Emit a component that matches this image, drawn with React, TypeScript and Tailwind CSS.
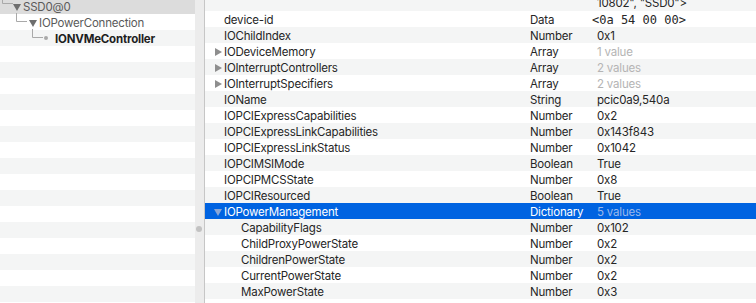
import type { ReactNode } from 'react';

/* IORegistryExplorer-style split view: device tree on the left,
   property table for the selected node on the right. */

type Prop = {
  key: string;
  type: string;
  value: string;
  level?: 0 | 1;
  expander?: 'closed' | 'open';
  dim?: boolean;
  mono?: boolean;
  selected?: boolean;
};

const props: Prop[] = [
  { key: 'device-id', type: 'Data', value: '<0a 54 00 00>', mono: true },
  { key: 'IOChildIndex', type: 'Number', value: '0x1' },
  { key: 'IODeviceMemory', type: 'Array', value: '1 value', expander: 'closed', dim: true },
  { key: 'IOInterruptControllers', type: 'Array', value: '2 values', expander: 'closed', dim: true },
  { key: 'IOInterruptSpecifiers', type: 'Array', value: '2 values', expander: 'closed', dim: true },
  { key: 'IOName', type: 'String', value: 'pcic0a9,540a' },
  { key: 'IOPCIExpressCapabilities', type: 'Number', value: '0x2' },
  { key: 'IOPCIExpressLinkCapabilities', type: 'Number', value: '0x143f843' },
  { key: 'IOPCIExpressLinkStatus', type: 'Number', value: '0x1042' },
  { key: 'IOPCIMSIMode', type: 'Boolean', value: 'True' },
  { key: 'IOPCIPMCSState', type: 'Number', value: '0x8' },
  { key: 'IOPCIResourced', type: 'Boolean', value: 'True' },
  { key: 'IOPowerManagement', type: 'Dictionary', value: '5 values', expander: 'open', dim: true, selected: true },
  { key: 'CapabilityFlags', type: 'Number', value: '0x102', level: 1 },
  { key: 'ChildProxyPowerState', type: 'Number', value: '0x2', level: 1 },
  { key: 'ChildrenPowerState', type: 'Number', value: '0x2', level: 1 },
  { key: 'CurrentPowerState', type: 'Number', value: '0x2', level: 1 },
  { key: 'MaxPowerState', type: 'Number', value: '0x3', level: 1 },
];

function Triangle({ open, className }: { open?: boolean; className?: string }) {
  return (
    <svg width="8" height="8" viewBox="0 0 8 8" className={className}>
      {open ? <path d="M0 1 H8 L4 8 Z" fill="currentColor" /> : <path d="M1 0 V8 L8 4 Z" fill="currentColor" />}
    </svg>
  );
}

/* ── Left: device tree ─────────────────────────────────────────────────────── */

function Elbow({ left, top }: { left: number; top: number }) {
  // "└" connector drawn in the tree gutter
  return (
    <svg width="12" height="12" viewBox="0 0 12 12" className="absolute" style={{ left, top }}>
      <path d="M1.5 0 V8.5 H12" stroke="#a9a9a9" strokeWidth="1" fill="none" />
    </svg>
  );
}

function TreeRow({ className, children }: { className?: string; children: ReactNode }) {
  return <div className={`relative h-4 shrink-0 ${className ?? ''}`}>{children}</div>;
}

function DeviceTree() {
  const stripes = Array.from({ length: 16 }, (_, i) => i);
  return (
    <div className="flex w-[195px] shrink-0 flex-col overflow-hidden">
      <div className="relative h-[14px] shrink-0 bg-[#dcdcdc]">
        <Elbow left={1} top={-5} />
        <Triangle open className="absolute left-[13px] top-[3px] text-[#6e6e6e]" />
        <span className="absolute left-[23px] top-[-2px] leading-[18px] text-[#5a5a5a]">SSD0@0</span>
      </div>
      <TreeRow>
        <Elbow left={15} top={-1} />
        <Triangle open className="absolute left-[29px] top-[5px] text-[#6e6e6e]" />
        <span className="absolute left-[39px] top-0 leading-[18px] text-[#5a5a5a]">IOPowerConnection</span>
      </TreeRow>
      <TreeRow className="bg-[#f4f5f5]">
        <Elbow left={31} top={-1} />
        <span className="absolute left-[44px] top-[6px] h-[4px] w-[4px] rounded-full bg-[#a9a9a9]" />
        <span className="absolute left-[55px] top-0 font-bold leading-[18px] text-[#1e1e1e]">IONVMeController</span>
      </TreeRow>
      {stripes.map((i) => (
        <TreeRow key={i} className={i % 2 === 1 ? 'bg-[#f4f5f5]' : 'bg-white'}>
          {null}
        </TreeRow>
      ))}
    </div>
  );
}

/* ── Right: property table ─────────────────────────────────────────────────── */

function PropRow({ p, striped }: { p: Prop; striped: boolean }) {
  const bg = p.selected ? 'bg-[#0063e1] text-white' : striped ? 'bg-[#f4f5f5]' : 'bg-white';
  const valueColor = p.dim ? (p.selected ? 'text-[#9ab8ea]' : 'text-[#b4b4b4]') : '';
  return (
    <div className={`flex h-4 shrink-0 items-start leading-[18px] ${bg}`}>
      <div className={`relative flex w-[325px] shrink-0 items-start ${p.level === 1 ? 'pl-[36px]' : 'pl-[19px]'}`}>
        {p.expander && (
          <Triangle
            open={p.expander === 'open'}
            className={`absolute left-[9px] top-[5px] ${p.selected ? 'text-[#8aa6d6]' : 'text-[#8e8e8e]'}`}
          />
        )}
        <span className="whitespace-nowrap">{p.key}</span>
      </div>
      <div className="w-[67px] shrink-0 whitespace-nowrap">{p.type}</div>
      <div
        className={`flex-1 whitespace-nowrap ${valueColor} ${p.mono ? "-ml-[5px] font-['DejaVu_Sans_Mono',monospace] text-[12px] tracking-normal" : ''}`}
      >
        {p.value}
      </div>
    </div>
  );
}

function PropertyTable() {
  return (
    <div className="flex min-w-0 flex-1 flex-col overflow-hidden">
      {/* row scrolled mostly out of view */}
      <div className="relative h-[11px] shrink-0 overflow-hidden bg-[#f4f5f5]">
        <span className="absolute left-[392px] top-[-6px] whitespace-nowrap leading-[18px]">10802", "SSD0"&gt;</span>
      </div>
      {props.map((p, i) => (
        <PropRow key={p.key} p={p} striped={i % 2 === 1} />
      ))}
      <div className="relative h-4 shrink-0 bg-white" />
    </div>
  );
}

export default function App() {
  return (
    <div className="flex h-[303px] w-[756px] overflow-hidden bg-white font-['Inter','Liberation_Sans',sans-serif] text-[11.5px] tracking-[-0.2px] text-[#262626]">
      <DeviceTree />
      <div className="relative w-[9px] shrink-0 bg-[#ececec]">
        <span className="absolute left-[1px] top-[226px] h-[6px] w-[6px] rounded-full bg-[#c2c2c2]" />
      </div>
      <div className="w-px shrink-0 bg-[#c6c6c6]" />
      <PropertyTable />
    </div>
  );
}
